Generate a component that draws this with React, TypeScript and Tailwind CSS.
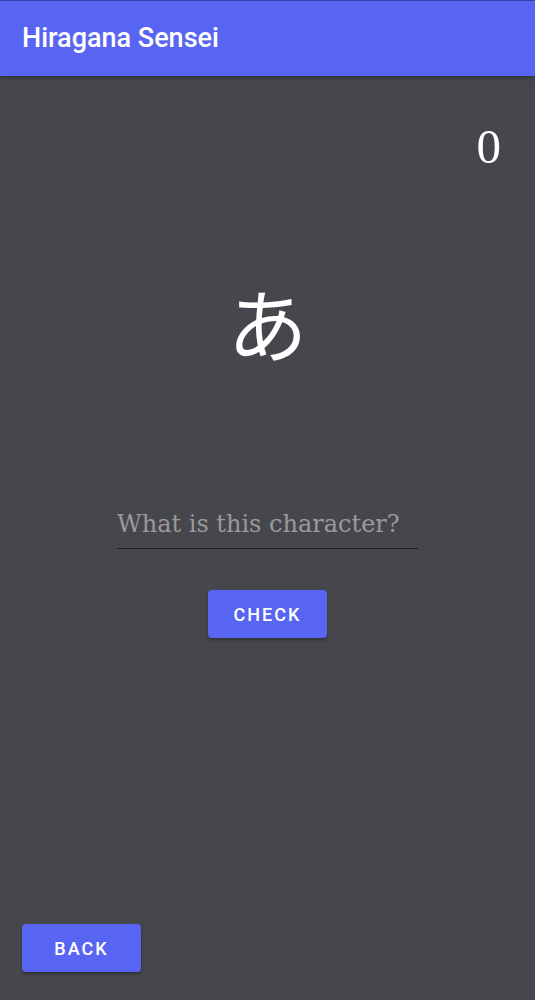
export default function App() {
  return (
    <div className="flex h-[1000px] w-[535px] flex-col bg-[#46474c] font-['Roboto',sans-serif]">
      {/* App bar */}
      <header className="flex h-[76px] items-center border-t border-[#3b40a8] bg-[#5865f2] pl-[22px] shadow-[0_2px_4px_rgba(0,0,0,0.3)]">
        <h1 className="text-[27px] font-medium text-white">Hiragana Sensei</h1>
      </header>

      <main className="flex flex-1 flex-col px-[22px]">
        {/* Score */}
        <div className="mt-[46px] pr-[12px] text-right font-['Liberation_Serif',serif] text-[49px] leading-none text-white">
          0
        </div>

        {/* Character */}
        <div className="mt-[110px] text-center font-['Noto_Sans_CJK_JP',sans-serif] text-[80px] leading-none text-white">
          あ
        </div>

        {/* Answer input */}
        <div className="mt-[145px] flex justify-center">
          <input
            type="text"
            placeholder="What is this character?"
            className="w-[301px] border-b border-[#1e1e1e] bg-transparent pb-[6px] font-['DejaVu_Serif',serif] text-[24px] text-white outline-none placeholder:text-[#9a9a9a]"
          />
        </div>

        <div className="mt-[41px] flex justify-center">
          <button className="h-[48px] w-[119px] rounded-[4px] bg-[#5865f2] text-[18px] font-medium tracking-[2px] text-white shadow-[0_2px_3px_rgba(0,0,0,0.3)]">
            CHECK
          </button>
        </div>

        <div className="flex-1" />

        <div className="mb-[28px]">
          <button className="h-[48px] w-[119px] rounded-[4px] bg-[#5865f2] text-[18px] font-medium tracking-[2px] text-white shadow-[0_2px_3px_rgba(0,0,0,0.3)]">
            BACK
          </button>
        </div>
      </main>
    </div>
  );
}
